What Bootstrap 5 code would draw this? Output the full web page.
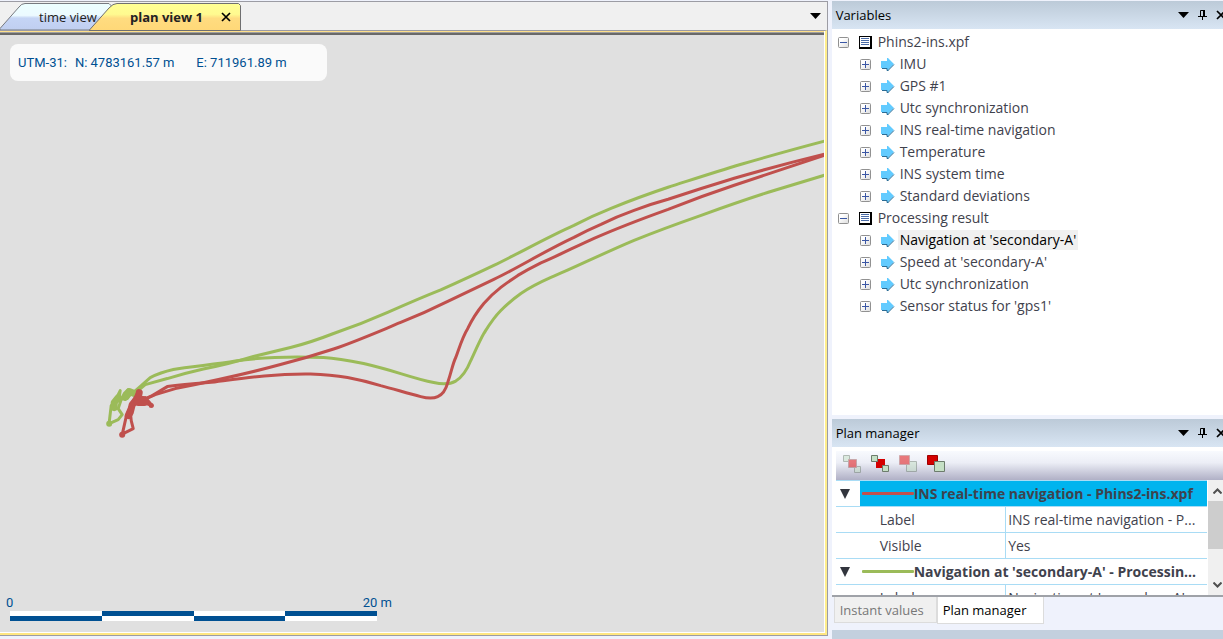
<!DOCTYPE html>
<html lang="en">
<head>
<meta charset="utf-8">
<meta name="viewport" content="width=device-width, initial-scale=1">
<title>Plan view</title>
<link href="https://cdn.jsdelivr.net/npm/bootstrap@5.3.0/dist/css/bootstrap.min.css" rel="stylesheet">
<style>
  body { font-family: "Open Sans", "Noto Sans", sans-serif; font-size: 14px; line-height: 22px; background: #eff2fc; color: #3f424d; }
  button { font: inherit; color: inherit; background: none; border: 0; padding: 0; }
  svg { display: block; flex: none; }
  .workspace { padding-top: 1px; }

  /* document area */
  .doc-frame { border: 1px solid #9c9ca4; border-left: 0; margin-bottom: 3px; background: #f0f0f0; min-width: 0; }
  .tab-strip { height: 28px; padding-right: 6px; }
  .doc-tab { position: relative; height: 28px; font-size: 13px; line-height: 30px; color: #222; }
  .doc-tab > svg { position: absolute; left: 0; top: 0; }
  .doc-tab > span, .doc-tab > .tab-close { position: relative; }
  .tab-time { width: 89px; padding-left: 39px; text-align: left; }
  .tab-plan { width: 153px; padding-left: 41px; color: #000; }
  .tab-plan .tab-label { font-weight: 700; width: 91px; text-align: left; }
  .tab-close { padding-top: 2px; }
  .plot-frame { border-top: 1px solid #9c9ca4; border-right: 2px solid #ffee8c; border-bottom: 2px solid #ffe680; background: #fff; }
  .plot-edge { border-top: 1px solid #ffe08a; margin: 0 1px 1px 0; }
  .plot { position: relative; border-top: 1px solid #a0a0a0; background: #e0e0e0; overflow: hidden; }
  .plot-body { border-top: 2px solid #696969; height: 100%; }
  .tracks { position: absolute; left: 0; top: 2px; width: 100%; height: 100%; }
  .plot-text { font-family: Roboto, sans-serif; font-size: 13px; line-height: 16px; color: #005092; }
  .coords { position: absolute; left: 10px; top: 11px; width: 317px; height: 37px; padding-left: 8px; border-radius: 8px; background: #fafafa; white-space: pre; }
  .coords .north { margin-left: 8px; }
  .coords .east { margin-left: 22px; }
  .scale { position: absolute; left: 10px; bottom: 11px; width: 367px; }
  .scale-ends { margin: 0 -15px 0 -4px; }
  .scale-bar { height: 10px; }
  .scale-bar i { background: linear-gradient(#fff 50%, #005092 50%); }
  .scale-bar i:nth-child(even) { background: linear-gradient(#005092 50%, #fff 50%); }

  /* docked panels */
  .dock { width: 32%; margin-left: 4px; overflow: hidden; flex: none; }
  .dock-head { height: 28px; padding-left: 4px; background: linear-gradient(#bccad8, #d8e5f3); color: #000; font-size: 13px; flex: none; }
  .dock-head h2 { font-size: 13px; line-height: 28px; margin: 0; font-weight: 400; }
  .dock-tools { margin-right: -3px; gap: 9px; }
  .tree-panel { background: #fff; padding-top: 2px; margin-bottom: 4px; min-height: 0; overflow: hidden; }
  .tree-row { height: 22px; padding-left: 6px; }
  .tree-row.child { padding-left: 28px; }
  .tree-row .kind { margin: 0 4px 0 10px; }
  .tree-row.child .kind { margin: 0 3px 0 10px; }
  .tree-name { padding: 0 2px; line-height: 20px; white-space: nowrap; }
  .tree-name.picked { background: #f0f0f0; color: #000; }

  .manager { height: 150px; padding-left: 4px; background: #fff; border-bottom: 2px solid #9fa2a8; flex: none; }
  .tool-row { height: 29px; padding: 0 0 3px 7px; gap: 10px; margin-top: 4px; background: linear-gradient(#f8fafe 0%, #eceef6 40%, #b0b0c6 100%); flex: none; }
  .grid-area { height: 115px; overflow: hidden; }
  .prop-grid { table-layout: fixed; width: 100%; }
  .prop-grid th, .prop-grid td { height: 26px; padding: 0 2px; line-height: 22px; border-top: 1px solid #a9dcf5; white-space: nowrap; overflow: hidden; text-overflow: ellipsis; font-weight: 400; }
  .prop-grid th + td { border-left: 1px solid #a9dcf5; }
  .prop-grid .prop-name { padding-left: 20px; }
  .prop-grid .group-name { font-weight: 700; }
  .group-picked .group-name { background: #00b4ee; }
  .fold { display: block; margin-left: 2px; }
  .swatch { display: inline-block; width: 52px; height: 3px; vertical-align: 4px; border-radius: 1px; }
  .col-toggle { width: 24px; }
  .col-name { width: 146px; }
  .red { background: #c0504d; } .green { background: #9bbb59; }
  .scroll-rail { width: 15px; background: #f0f0f0; margin-left: 1px; }
  .scroll-thumb { height: 48px; background: #cdcdcd; }
  .scroll-rail button { height: 21px; padding-left: 3px; display: flex; align-items: center; justify-content: center; }
  .dock-tabs { height: 33px; padding-left: 2px; flex: none; font-size: 13px; }
  .dock-tabs button { height: 26px; border: 1px solid #dcdcdc; border-top: 0; background: #f0f0f0; color: #777; width: 103px; text-align: left; padding-left: 5px; }
  .dock-tabs button.current { height: 27px; background: #fff; color: #000; width: 107px; }
  .dock-foot { height: 9px; background: #c3d0de; flex: none; }
</style>
</head>
<body>
<svg width="0" height="0" class="position-absolute" aria-hidden="true">
  <defs>
    <linearGradient id="boxFill" x2="1" y2="1"><stop offset=".3" stop-color="#fff"/><stop offset="1" stop-color="#dcdcdc"/></linearGradient>
    <linearGradient id="blueTab" x2="0" y2="1"><stop offset="0" stop-color="#ecffff"/><stop offset=".45" stop-color="#ecfaff"/><stop offset=".55" stop-color="#c5d5f5"/><stop offset="1" stop-color="#c0cff0"/></linearGradient>
    <linearGradient id="goldTab" x2="0" y2="1"><stop offset="0" stop-color="#ffff94"/><stop offset=".4" stop-color="#fffa90"/><stop offset=".55" stop-color="#ffdc80"/><stop offset="1" stop-color="#ffd878"/></linearGradient>
    <symbol id="plus" viewBox="0 0 11 11"><rect x=".5" y=".5" width="10" height="10" rx="1" fill="url(#boxFill)" stroke="#919191"/><path d="M2 5.5h7M5.5 2v7" stroke="#3b57a5"/></symbol>
    <symbol id="minus" viewBox="0 0 11 11"><rect x=".5" y=".5" width="10" height="10" rx="1" fill="url(#boxFill)" stroke="#919191"/><path d="M2 5.5h7" stroke="#3b57a5"/></symbol>
    <symbol id="sheet" viewBox="0 0 13 13"><path d="M0 0h13v13H0z" fill="#000"/><path d="M1 1h10v10H1z" fill="#fff"/><path d="M2 2.500h8M2 4.500h8M2 6.500h8M2 8.500h8" stroke="#4a6ca8"/></symbol>
    <symbol id="arrow" viewBox="0 0 14 13"><path d="M0 3h6V0h1l6 6-6 6H6v-2H0z" fill="#62cbff"/><path d="M13 6.500l-6 6M1 10.500h5v2h1.500" fill="none" stroke="#2b6c95"/></symbol>
    <symbol id="down" viewBox="0 0 11 6"><path d="M0 0h11L5.500 6z" fill="#000"/></symbol>
    <symbol id="pin" viewBox="0 0 9 10"><path d="M2.500 6V.500h4M0 6.500h9M4.500 7v3" fill="none" stroke="#000"/><path d="M6 0v6" stroke="#000" stroke-width="2"/></symbol>
    <symbol id="cross" viewBox="0 0 10 10"><path d="M1 1l8 8M9 1L1 9" stroke="#000" stroke-width="1.700"/></symbol>
    <symbol id="fold" viewBox="0 0 10 10"><path d="M0 0h10L5 10z" fill="#32353d"/></symbol>
  </defs>
</svg>

<div class="workspace d-flex vh-100">
  <main class="doc-frame d-flex flex-column flex-grow-1">
    <div class="tab-strip d-flex align-items-center flex-shrink-0">
      <button class="doc-tab tab-time" type="button">
        <svg width="116" height="28" aria-hidden="true"><path d="M0 26.500L19 5Q21.500 1.500 25 1.500H109l3 3L90 28H0z" fill="url(#blueTab)" stroke="#777a80"/></svg>
        <span class="text-nowrap">time view</span>
      </button>
      <div class="doc-tab tab-plan d-flex align-items-center">
        <svg width="153" height="29" aria-hidden="true"><path d="M0 28.500L20 6Q24 1.500 28 1.500H149.500L151.500 3.500V28.500z" fill="url(#goldTab)" stroke="#6f6f70"/></svg>
        <button class="tab-label doc-tab text-nowrap" type="button"><span>plan view 1</span></button>
        <button class="tab-close" type="button" aria-label="Close tab"><svg width="10" height="10"><use href="#cross"/></svg></button>
      </div>
      <button class="ms-auto" type="button" aria-label="Tab list"><svg width="11" height="6"><use href="#down"/></svg></button>
    </div>
    <div class="plot-frame flex-grow-1 d-flex">
      <div class="plot-edge flex-grow-1 d-flex">
        <div class="plot flex-grow-1">
          <div class="plot-body"></div>
          <svg class="tracks" viewBox="0 0 824 598" preserveAspectRatio="xMinYMin slice" role="img" aria-label="Navigation tracks">
            <g transform="translate(0 -35)" fill="none" stroke-width="3" stroke-linejoin="round" stroke-linecap="round">
              <g stroke="#9bbb59">
                <path d="M133 392L141 385L150 377Q160 372 173 369C188 366 215 364 235 360.500C262 356.500 296 356 323 357C338 358 348 360 363 363C380 367 390 370 400 373C413 377 423 380 433 382Q447 385 455 380.500Q464 375 470 360C476 347 480 338 483 333C488 325 492 318 500 310C506 304 513 298 520 293Q532 285 550 277C572 268 602 253 633 240Q660 229 700 215C725 206 745 199 767 192L823 175"/>
                <path d="M133 394L145 384L167 378C180 374 192 371 203 368.500C225 364 240 360 253 356L290 347Q310 342 333 333Q360 324 387 312C405 304 421 297 440 289.500Q470 276 493 265C518 253 546 237 573 225Q590 216 610 208Q640 196 667 187C689 180 713 172 740 164Q785 151 823 141"/>
                <path d="M109 422L111 405L115 400L120 390L119 397L125 399L133 391M109 423L118 419L122 414L118 408L121 399L124 393L128 389L132 393M112 404L120 398"/>
                <path d="M114 407v-5l4-5M126 396l3-5 5 2" stroke-width="7"/>
              </g>
              <g stroke="#c0504d">
                <path d="M139 401L152 395L167 386C180 384 193 383 208 382C240 378 270 373 310 373.500C325 374 335 375 347 377Q363 380 380 385C395 389 408 393 420 396Q431 399 437 396Q444 393 447 382C451 370 452 363 455 357C460 343 462 336 467 328Q473 315 483 303Q491 294 500 287Q508 281 517 275Q527 269 540 262.500C558 255 575 246 593 238C618 227 642 218 667 209Q700 196 733 185L823 155"/>
                <path d="M139 401L155 394L175 388C205 382 240 375 280 364Q307 357 333 348.500C355 341 378 331 400 322Q425 312 447 301Q470 290 493 279C518 267 545 250 573 237Q586 230 600 224Q616 216 633 210Q649 204 667 199C688 192 710 185 733 178Q778 165 823 154"/>
                <path d="M122 434L126 416L131 404L138 391M121 434L133 428L131 420L130 410L135 403L143 402L152 405L145 397"/>
                <path d="M130 412l2-8 4-5 7 0M128 415l3-7M139 392l-1 5" stroke-width="7"/>
                <path d="M138 401h6" stroke-width="9"/>
                <path d="M138 392v5" stroke-width="4"/>
              </g>
              <circle cx="109" cy="423" r="3" fill="#9bbb59"/>
              <circle cx="122" cy="434" r="3" fill="#c0504d"/>
              <circle cx="151" cy="405" r="2.500" fill="#c0504d"/>
            </g>
          </svg>
          <div class="coords plot-text d-flex align-items-center"><span>UTM-31:</span><span class="north">N: 4783161.57 m</span><span class="east">E: 711961.89 m</span></div>
          <div class="scale plot-text">
            <div class="scale-ends d-flex justify-content-between"><span>0</span><span>20 m</span></div>
            <div class="scale-bar d-flex"><i class="flex-fill"></i><i class="flex-fill"></i><i class="flex-fill"></i><i class="flex-fill"></i></div>
          </div>
        </div>
      </div>
    </div>
  </main>

  <aside class="dock d-flex flex-column">
    <div class="dock-head d-flex align-items-center justify-content-between">
      <h2>Variables</h2>
      <div class="dock-tools d-flex align-items-center">
        <button type="button" aria-label="Variables menu"><svg width="11" height="6"><use href="#down"/></svg></button>
        <button type="button" aria-label="Pin Variables"><svg width="9" height="10"><use href="#pin"/></svg></button>
        <button type="button" aria-label="Close Variables"><svg width="10" height="10"><use href="#cross"/></svg></button>
      </div>
    </div>
    <div class="tree-panel flex-grow-1">
      <ul class="list-unstyled m-0">
        <li><div class="tree-row d-flex align-items-center"><button type="button" aria-label="Collapse"><svg width="11" height="11"><use href="#minus"/></svg></button><svg class="kind" width="13" height="13"><use href="#sheet"/></svg><span class="tree-name">Phins2-ins.xpf</span></div>
          <ul class="list-unstyled">
            <li class="tree-row child d-flex align-items-center"><button type="button" aria-label="Expand"><svg width="11" height="11"><use href="#plus"/></svg></button><svg class="kind" width="14" height="13"><use href="#arrow"/></svg><span class="tree-name">IMU</span></li>
            <li class="tree-row child d-flex align-items-center"><button type="button" aria-label="Expand"><svg width="11" height="11"><use href="#plus"/></svg></button><svg class="kind" width="14" height="13"><use href="#arrow"/></svg><span class="tree-name">GPS #1</span></li>
            <li class="tree-row child d-flex align-items-center"><button type="button" aria-label="Expand"><svg width="11" height="11"><use href="#plus"/></svg></button><svg class="kind" width="14" height="13"><use href="#arrow"/></svg><span class="tree-name">Utc synchronization</span></li>
            <li class="tree-row child d-flex align-items-center"><button type="button" aria-label="Expand"><svg width="11" height="11"><use href="#plus"/></svg></button><svg class="kind" width="14" height="13"><use href="#arrow"/></svg><span class="tree-name">INS real-time navigation</span></li>
            <li class="tree-row child d-flex align-items-center"><button type="button" aria-label="Expand"><svg width="11" height="11"><use href="#plus"/></svg></button><svg class="kind" width="14" height="13"><use href="#arrow"/></svg><span class="tree-name">Temperature</span></li>
            <li class="tree-row child d-flex align-items-center"><button type="button" aria-label="Expand"><svg width="11" height="11"><use href="#plus"/></svg></button><svg class="kind" width="14" height="13"><use href="#arrow"/></svg><span class="tree-name">INS system time</span></li>
            <li class="tree-row child d-flex align-items-center"><button type="button" aria-label="Expand"><svg width="11" height="11"><use href="#plus"/></svg></button><svg class="kind" width="14" height="13"><use href="#arrow"/></svg><span class="tree-name">Standard deviations</span></li>
          </ul>
        </li>
        <li><div class="tree-row d-flex align-items-center"><button type="button" aria-label="Collapse"><svg width="11" height="11"><use href="#minus"/></svg></button><svg class="kind" width="13" height="13"><use href="#sheet"/></svg><span class="tree-name">Processing result</span></div>
          <ul class="list-unstyled">
            <li class="tree-row child d-flex align-items-center"><button type="button" aria-label="Expand"><svg width="11" height="11"><use href="#plus"/></svg></button><svg class="kind" width="14" height="13"><use href="#arrow"/></svg><span class="tree-name picked">Navigation at 'secondary-A'</span></li>
            <li class="tree-row child d-flex align-items-center"><button type="button" aria-label="Expand"><svg width="11" height="11"><use href="#plus"/></svg></button><svg class="kind" width="14" height="13"><use href="#arrow"/></svg><span class="tree-name">Speed at 'secondary-A'</span></li>
            <li class="tree-row child d-flex align-items-center"><button type="button" aria-label="Expand"><svg width="11" height="11"><use href="#plus"/></svg></button><svg class="kind" width="14" height="13"><use href="#arrow"/></svg><span class="tree-name">Utc synchronization</span></li>
            <li class="tree-row child d-flex align-items-center"><button type="button" aria-label="Expand"><svg width="11" height="11"><use href="#plus"/></svg></button><svg class="kind" width="14" height="13"><use href="#arrow"/></svg><span class="tree-name">Sensor status for 'gps1'</span></li>
          </ul>
        </li>
      </ul>
    </div>

    <div class="dock-head d-flex align-items-center justify-content-between">
      <h2>Plan manager</h2>
      <div class="dock-tools d-flex align-items-center">
        <button type="button" aria-label="Plan manager menu"><svg width="11" height="6"><use href="#down"/></svg></button>
        <button type="button" aria-label="Pin Plan manager"><svg width="9" height="10"><use href="#pin"/></svg></button>
        <button type="button" aria-label="Close Plan manager"><svg width="10" height="10"><use href="#cross"/></svg></button>
      </div>
    </div>
    <div class="manager">
      <div class="tool-row d-flex align-items-center">
        <button type="button" aria-label="Bring forward" disabled><svg width="18" height="18" opacity=".5"><g fill="#c5e0c5" stroke="#708070"><path d="M.5.5h6v6h-6zM11.500 11.500h6v6h-6z"/></g><path d="M5.500 4.500h8v8h-8z" fill="#e00000" stroke="#a06060"/></svg></button>
        <button type="button" aria-label="Send backward"><svg width="18" height="18"><path d="M5 4h9v9H5z" fill="#d40000"/><g fill="#c5e0c5" stroke="#6c7c6c"><path d="M.5.5h6v6h-6zM11.500 10.500h6v6h-6z"/></g></svg></button>
        <button type="button" aria-label="Bring to front" disabled><svg width="18" height="18" opacity=".5"><path d="M7.500 6.500h10v10h-10z" fill="#c5e0c5" stroke="#708070"/><path d="M.5.500h10v9H.5z" fill="#e00000" stroke="#b06060"/></svg></button>
        <button type="button" aria-label="Send to back"><svg width="18" height="18"><path d="M.5.500h10v9H.5z" fill="#d40000" stroke="#a00000"/><path d="M7.500 6.500h10v10h-10z" fill="#c5e0c5" stroke="#6c7c6c"/></svg></button>
      </div>
      <div class="grid-area d-flex">
        <div class="flex-grow-1 overflow-hidden">
          <table class="prop-grid">
            <colgroup><col class="col-toggle"><col class="col-name"><col></colgroup>
            <tbody>
              <tr class="group-picked"><td><button class="fold" type="button" aria-label="Collapse group"><svg width="10" height="10"><use href="#fold"/></svg></button></td><th class="group-name" colspan="2"><span class="swatch red"></span>INS real-time navigation - Phins2-ins.xpf</th></tr>
              <tr><td></td><th class="prop-name" scope="row">Label</th><td>INS real-time navigation - P...</td></tr>
              <tr><td></td><th class="prop-name" scope="row">Visible</th><td>Yes</td></tr>
              <tr><td><button class="fold" type="button" aria-label="Collapse group"><svg width="10" height="10"><use href="#fold"/></svg></button></td><th class="group-name" colspan="2"><span class="swatch green"></span>Navigation at 'secondary-A' - Processin...</th></tr>
              <tr><td></td><th class="prop-name" scope="row">Label</th><td>Navigation at 'secondary-A'...</td></tr>
            </tbody>
          </table>
        </div>
        <div class="scroll-rail d-flex flex-column flex-shrink-0">
          <button type="button" aria-label="Scroll up"><svg width="9" height="6"><path d="M.5 5.500l4-4 4 4" fill="none" stroke="#505050" stroke-width="2"/></svg></button>
          <div class="scroll-thumb"></div>
          <button class="mt-auto" type="button" aria-label="Scroll down"><svg width="9" height="6"><path d="M.5.500l4 4 4-4" fill="none" stroke="#505050" stroke-width="2"/></svg></button>
        </div>
      </div>
    </div>
    <div class="dock-tabs d-flex">
      <button type="button">Instant values</button><button class="current" type="button">Plan manager</button>
    </div>
    <div class="dock-foot"></div>
  </aside>
</div>
<script src="https://cdn.jsdelivr.net/npm/bootstrap@5.3.0/dist/js/bootstrap.bundle.min.js"></script>
</body>
</html>
